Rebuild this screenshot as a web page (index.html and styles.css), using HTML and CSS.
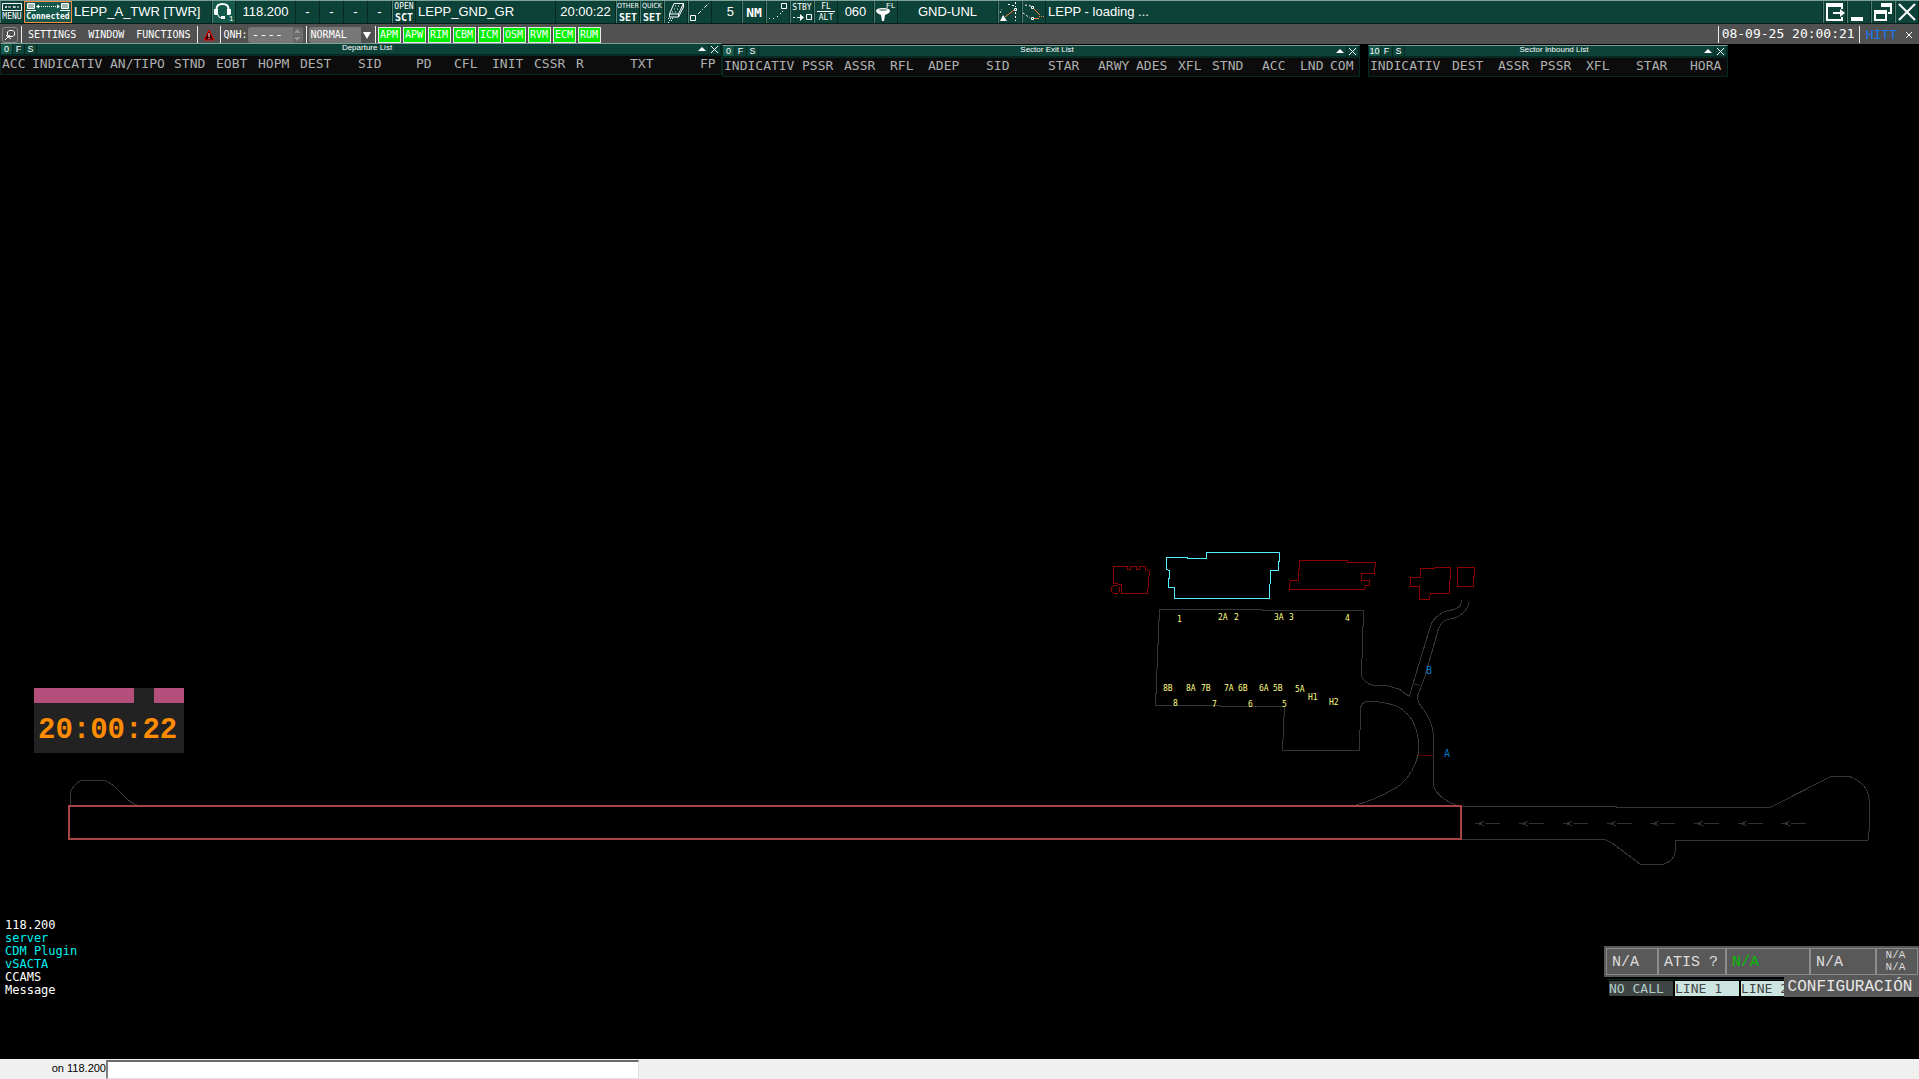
FILE: index.html
```html
<!DOCTYPE html>
<html lang="es">
    <head>
        <meta charset="UTF-8" />
        <meta name="viewport" content="width=device-width, initial-scale=1.0"/>
        <title>LEPP_A_TWR</title>
        <link rel="stylesheet" href="styles.css">
    </head>
    <body>
        <header class="topbar">
            <button type="button" class="cell w-24 stack">
                <svg width="20" height="8" viewBox="0 0 20 8"><path d="M.5.5h19v7H.5z" class="line"/><path d="M3 4h2M6 4h3M11 4h3M15 4h2M4 3v2M12 3v2" class="line"/></svg>
                <span class="tiny">MENU</span>
            </button>
            <button type="button" class="cell w-48 stack connected">
                <svg width="44" height="8" viewBox="0 0 44 8"><path d="M1.500 .5h7v5h-7zM0 7.500h10M35.500 .5h7v5h-7zM34 7.500h10" class="line"/><path d="M2 1h6v4H2zM36 1h6v4h-6z" fill="#9fb8b2"/><path d="M13 3.500h19" class="line" stroke-dasharray="1 1"/><path d="M10 3.500l3-2v4zM34 3.500l-3-2v4z" fill="#fff"/></svg>
                <span class="tiny">Connected</span>
            </button>
            <div class="cell w-140 left">LEPP_A_TWR [TWR]</div>
            <button type="button" class="cell w-24 lit" aria-label="Voice">
                <svg width="22" height="20" viewBox="0 0 22 20"><path d="M3.500 9V7q0-5 6-5t6 5v2" class="line thick"/><path d="M1 7h4v6H2l-1-1zM14 7h4v5l-1 1h-3z" fill="#fff"/><path d="M4.500 12q1 4 4 4" class="line"/><path d="M8 14h4v3H8z" fill="#fff"/><text x="16" y="19" class="svg-num">1</text></svg>
            </button>
            <div class="cell w-60">118.200</div>
            <div class="cell w-24">-</div>
            <div class="cell w-24">-</div>
            <div class="cell w-24">-</div>
            <div class="cell w-24">-</div>
            <button type="button" class="cell w-24 stack"><span class="tiny">OPEN</span><span class="small">SCT</span></button>
            <div class="cell w-140 left">LEPP_GND_GR</div>
            <div class="cell w-60">20:00:22</div>
            <button type="button" class="cell w-24 stack"><span class="tiny narrow">OTHER</span><span class="small">SET</span></button>
            <button type="button" class="cell w-24 stack"><span class="tiny narrow">QUICK</span><span class="small">SET</span></button>
            <button type="button" class="cell w-24" aria-label="Draw">
                <svg width="22" height="22" viewBox="0 0 22 22"><path d="M9 2.500h9.500l-5 10.500H4.500zM4.500 13v3h9l5-10V2.500M13.500 13v3" class="line"/><path d="M10 5h6M9 8h6M7 11h6" class="line" stroke-dasharray="1 2"/><path d="M3 17.500h6M4 19.500h4M3 21.500h2" class="line" stroke-dasharray="1 1"/></svg>
            </button>
            <button type="button" class="cell w-24" aria-label="Measure">
                <svg width="22" height="22" viewBox="0 0 22 22"><path d="M1.500 14.500h5v5h-5z" class="line"/><path d="M9 13L20 2" class="line" stroke-dasharray="4 2 1 2"/></svg>
            </button>
            <div class="cell w-30 right">5</div>
            <button type="button" class="cell w-24 unit">NM</button>
            <button type="button" class="cell w-24" aria-label="History trail">
                <svg width="22" height="22" viewBox="0 0 22 22"><path d="M14.500 2.500h5v5h-5z" class="line"/><path d="M2 17.500h1M6 17.500h1M10 15.500h1M13 12.500h1M15 10.500h1" class="line"/></svg>
            </button>
            <button type="button" class="cell w-24 stack">
                <span class="tiny">STBY</span>
                <svg width="20" height="9" viewBox="0 0 20 9"><path d="M1 4.500h2M5 4.500h6M14.500 1.500h5v5h-5z" class="line"/><path d="M8 1l4 3.500L8 8z" fill="#fff"/></svg>
            </button>
            <button type="button" class="cell w-24 stack"><span class="tiny over">FL</span><span class="tiny">ALT</span></button>
            <div class="cell w-36">060</div>
            <button type="button" class="cell w-24" aria-label="Level filter">
                <svg width="22" height="22" viewBox="0 0 22 22"><path d="M1 10q0-3 7-3t7 3q0 2-5 4l-1 6H7l-1-6q-5-2-5-4z" fill="#fff"/><path d="M3 9q5-2 10 0-5 2-10 0" fill="#78958d"/><text x="11" y="7" class="svg-num">FL</text></svg>
            </button>
            <div class="cell w-100">GND-UNL</div>
            <button type="button" class="cell w-24" aria-label="Runway">
                <svg width="22" height="22" viewBox="0 0 22 22"><path d="M1 20h7L4 14z" fill="#fff"/><path d="M6 16L15 9" class="line warm"/><path d="M15.500 7.500h2v2h-2z" class="line"/><path d="M16.500 11v9M9 3.500h2M13 4.500h2M16.500 1v5M1 12l2-4" class="line" stroke-dasharray="2 2"/></svg>
            </button>
            <button type="button" class="cell w-24" aria-label="Routes">
                <svg width="22" height="22" viewBox="0 0 22 22"><path d="M10 7l7 7M10 17.500h6" class="line warm"/><path d="M16 15.500h6" class="line warm" stroke-dasharray="1 1"/><path d="M8.500 5.500h2v2h-2zM8.500 16.500h2v2h-2z" class="line"/><path d="M2 4l6 1M0 12l7 5" class="line" stroke-dasharray="2 2"/></svg>
            </button>
            <div class="cell grow left">LEPP - loading ...</div>
            <button type="button" class="cell w-24" aria-label="Exit">
                <svg width="20" height="18" viewBox="0 0 20 18"><path d="M17 6V1H2v16h15v-3" class="line thick"/><path d="M1 0h17v4H1z" fill="#fff"/><path d="M8 10h8" class="line thick"/><path d="M15 6l5 4-5 4z" fill="#fff"/></svg>
            </button>
            <button type="button" class="cell w-24" aria-label="Minimize">
                <svg width="20" height="18" viewBox="0 0 20 18"><path d="M2 14h12v4H2z" fill="#fff"/></svg>
            </button>
            <button type="button" class="cell w-24" aria-label="Restore">
                <svg width="20" height="18" viewBox="0 0 20 18"><path d="M9 2h9v8h-3M2 8h11v9H2z" class="line thick"/><path d="M8 0h11v4H8zM1 7h13v4H1z" fill="#fff"/></svg>
            </button>
            <button type="button" class="cell w-24" aria-label="Close">
                <svg width="20" height="18" viewBox="0 0 20 18"><path d="M2 1l16 16M18 1L2 17" class="line thick"/></svg>
            </button>
        </header>

        <nav class="menubar">
            <button type="button" class="pin" aria-label="Pin">
                <svg width="12" height="12" viewBox="0 0 12 12"><path d="M5 1.500h4l1.500 1.500v3L9 7.500H5L3.500 6V3z" class="line"/><path d="M6 6L1 11M2 6l5 4" class="line"/></svg>
            </button>
            <div class="menus">
                <a href="#settings">SETTINGS</a>
                <a href="#window">WINDOW</a>
                <a href="#functions">FUNCTIONS</a>
            </div>
            <div class="group alert">
                <svg width="12" height="12" viewBox="0 0 12 12"><path d="M6 1L1 11h10z" fill="#400" stroke="#f00000"/><path d="M6 4v4M6 9v1" class="line"/></svg>
            </div>
            <div class="group">
                <label for="qnh">QNH:</label>
                <div class="spin">
                    <input type="text" id="qnh" value="----">
                    <svg width="9" height="16" viewBox="0 0 9 16"><path d="M0 0h9v7H0zM0 8h9v8H0z" fill="#676767"/><path d="M1 6l3-4 4 4zM1 10h7l-4 4z" fill="#949494"/></svg>
                </div>
            </div>
            <div class="group">
                <div class="drop">
                    <select id="mode" aria-label="Mode">
                        <option>NORMAL</option>
                    </select>
                    <svg width="12" height="16" viewBox="0 0 12 16"><path d="M0 0h12v16H0z" fill="#505050"/><path d="M2 5h8l-4 7z" fill="#fff"/></svg>
                </div>
            </div>
            <div class="group flags">
                <button type="button">APM</button>
                <button type="button">APW</button>
                <button type="button">RIM</button>
                <button type="button">CBM</button>
                <button type="button">ICM</button>
                <button type="button">OSM</button>
                <button type="button">RVM</button>
                <button type="button">ECM</button>
                <button type="button">RUM</button>
            </div>
            <div class="date">08-09-25 20:00:21</div>
            <div class="group hitt">HITT</div>
            <button type="button" class="shut" aria-label="Close bar">
                <svg width="8" height="8" viewBox="0 0 8 8"><path d="M1 1l6 6M7 1L1 7" class="line"/></svg>
            </button>
        </nav>

        <main class="radar">
            <svg class="map" viewBox="0 44 1919 1015" preserveAspectRatio="xMinYMin meet">
                <!-- terminal buildings and apron -->
                <svg x="1100" y="540" width="400" height="220" viewBox="0 0 1200 660">
                    <path class="building" d="M40 79H82V88H91V79H109V88H119V79H136V88L148 93V106L145 116V143L142 146V160H64V133H56L52 130H40z"/>
                    <circle class="building" cx="47" cy="148" r="13"/>
                    <path class="terminal" d="M199 52H261V55H320V37H539V62L536 66V91H511V130L508 134V175H223V142H205V117L208 115V91L199 89z"/>
                    <path class="building" d="M598 61H742V67H827V79L824 82V100H784V121H808V136H796L793 148H568V136L571 121H595V91L598 88z"/>
                    <path class="building" d="M962 86H1004V82H1051V118L1048 122V160H991L988 178H958V139H931V112H961z"/>
                    <path class="building" d="M1072 82H1123V109L1120 112V139H1072z"/>
                    <path class="taxi" d="M784 357V409Q796 430 820 436Q872 436 882 443Q900 446 910 457L928 469L943 418L991 260Q997 240 1010 231Q1028 215 1048 211Q1084 208 1085 180"/>
                    <path class="taxi" d="M784 357L787 352V262L790 259V211H486V208H179V238L176 243V312L172 316V385L169 390V460L166 463V496H360V499H553V528L550 534V595L547 599V631H778V573L781 568V505Q785 490 799 484Q835 484 856 489Q895 497 910 511Q936 532 943 556Q955 580 955 610V646L949 660"/>
                    <path class="taxi" d="M1108 183Q1105 210 1081 225Q1065 237 1040 238Q1021 249 1015 268L973 415L952 469Q954 490 970 508Q990 535 997 564L1000 580V660M940 430L961 438"/>
                    <path class="stopbar" d="M955 646H1000"/>
                </svg>
                <!-- taxiway joining the runway -->
                <path class="taxi" d="M1418 755Q1412 779 1394 789Q1375 800 1356 805M1433 755V783Q1435 797 1456 805"/>
                <!-- runway ends -->
                <path class="taxi" d="M1462 806H1616V807H1771L1830 777L1836 776H1848Q1868 783 1869 799V831L1868 840H1675V852Q1674 861 1664 864H1640L1612 843L1604 839H1462"/>
                <path class="taxi" d="M70 805V796Q71 785 82 780H103Q111 782 120 792Q131 804 137 805"/>
                <rect class="runway" x="69" y="806" width="1392" height="33"/>
                <g class="arrow">
                    <path id="arrow" d="M1477 823.500h5M1485 823.500h15M1484 821.500l-7 2 7 2"/>
                    <use href="#arrow" x="44"/>
                    <use href="#arrow" x="88"/>
                    <use href="#arrow" x="132"/>
                    <use href="#arrow" x="175"/>
                    <use href="#arrow" x="219"/>
                    <use href="#arrow" x="263"/>
                    <use href="#arrow" x="306"/>
                </g>
                <g class="stand">
                    <text x="1177" y="622">1</text>
                    <text x="1218" y="620">2A</text>
                    <text x="1234" y="620">2</text>
                    <text x="1274" y="620">3A</text>
                    <text x="1289" y="620">3</text>
                    <text x="1345" y="621">4</text>
                    <text x="1163" y="691">8B</text>
                    <text x="1186" y="691">8A</text>
                    <text x="1201" y="691">7B</text>
                    <text x="1224" y="691">7A</text>
                    <text x="1238" y="691">6B</text>
                    <text x="1259" y="691">6A</text>
                    <text x="1273" y="691">5B</text>
                    <text x="1295" y="692">5A</text>
                    <text x="1308" y="700">H1</text>
                    <text x="1329" y="705">H2</text>
                    <text x="1173" y="706">8</text>
                    <text x="1212" y="707">7</text>
                    <text x="1248" y="707">6</text>
                    <text x="1282" y="707">5</text>
                </g>
                <g class="taxi-name">
                    <text x="1426" y="674">B</text>
                    <text x="1444" y="757">A</text>
                </g>
            </svg>

            <section class="list departure">
                <div class="title">
                    <button type="button" class="on">0</button><button type="button">F</button><button type="button">S</button>
                    <h2>Departure List</h2>
                    <button type="button" aria-label="Collapse"><svg width="10" height="9" viewBox="0 0 10 9"><path d="M1 6h8L5 2z" fill="#fff"/></svg></button><button type="button" aria-label="Close"><svg width="10" height="9" viewBox="0 0 10 9"><path d="M2 1l7 7M9 1L2 8" class="line"/></svg></button>
                </div>
                <table>
                    <tr>
                        <th class="c-30">ACC</th>
                        <th class="c-78">INDICATIV</th>
                        <th class="c-64">AN/TIPO</th>
                        <th class="c-42">STND</th>
                        <th class="c-42">EOBT</th>
                        <th class="c-42">HOPM</th>
                        <th class="c-58">DEST</th>
                        <th class="c-58">SID</th>
                        <th class="c-38">PD</th>
                        <th class="c-38">CFL</th>
                        <th class="c-42">INIT</th>
                        <th class="c-42">CSSR</th>
                        <th class="c-54">R</th>
                        <th class="c-70">TXT</th>
                        <th>FP</th>
                    </tr>
                </table>
            </section>

            <section class="list exit">
                <div class="title">
                    <button type="button" class="on">0</button><button type="button">F</button><button type="button">S</button>
                    <h2>Sector Exit List</h2>
                    <button type="button" aria-label="Collapse"><svg width="10" height="9" viewBox="0 0 10 9"><path d="M1 6h8L5 2z" fill="#fff"/></svg></button><button type="button" aria-label="Close"><svg width="10" height="9" viewBox="0 0 10 9"><path d="M2 1l7 7M9 1L2 8" class="line"/></svg></button>
                </div>
                <table>
                    <tr>
                        <th class="c-78">INDICATIV</th>
                        <th class="c-42">PSSR</th>
                        <th class="c-46">ASSR</th>
                        <th class="c-38">RFL</th>
                        <th class="c-58">ADEP</th>
                        <th class="c-62">SID</th>
                        <th class="c-50">STAR</th>
                        <th class="c-38">ARWY</th>
                        <th class="c-42">ADES</th>
                        <th class="c-34">XFL</th>
                        <th class="c-50">STND</th>
                        <th class="c-38">ACC</th>
                        <th class="c-30">LND</th>
                        <th>COM</th>
                    </tr>
                </table>
            </section>

            <section class="list inbound">
                <div class="title">
                    <button type="button" class="on">10</button><button type="button">F</button><button type="button">S</button>
                    <h2>Sector Inbound List</h2>
                    <button type="button" aria-label="Collapse"><svg width="10" height="9" viewBox="0 0 10 9"><path d="M1 6h8L5 2z" fill="#fff"/></svg></button><button type="button" aria-label="Close"><svg width="10" height="9" viewBox="0 0 10 9"><path d="M2 1l7 7M9 1L2 8" class="line"/></svg></button>
                </div>
                <table>
                    <tr>
                        <th class="c-82">INDICATIV</th>
                        <th class="c-46">DEST</th>
                        <th class="c-42">ASSR</th>
                        <th class="c-46">PSSR</th>
                        <th class="c-50">XFL</th>
                        <th class="c-54">STAR</th>
                        <th>HORA</th>
                    </tr>
                </table>
            </section>

            <section class="clock">
                <div class="strip"><span></span><span></span></div>
                <time>20:00:22</time>
            </section>

            <ul class="chat">
                <li>118.200</li>
                <li class="unread">server</li>
                <li class="unread">CDM Plugin</li>
                <li class="unread">vSACTA</li>
                <li>CCAMS</li>
                <li>Message</li>
            </ul>

            <section class="atis">
                <div class="status">
                    <button type="button" class="s-52">N/A</button>
                    <button type="button" class="s-68">ATIS ?</button>
                    <button type="button" class="s-84 ok">N/A</button>
                    <button type="button" class="s-66">N/A</button>
                    <button type="button" class="s-42 two">N/A<br>N/A</button>
                </div>
                <div class="lines">
                    <div class="calls">
                        <button type="button" class="idle">NO CALL</button>
                        <button type="button">LINE 1</button>
                        <button type="button">LINE 2</button>
                    </div>
                    <button type="button" class="config">CONFIGURACIÓN</button>
                </div>
            </section>
        </main>

        <footer class="command">
            <label for="cmd">on 118.200</label>
            <input type="text" id="cmd" autofocus>
        </footer>
    </body>
</html>
```
FILE: styles.css
```css
* {
    box-sizing: border-box;
}
body {
    margin: 0;
    height: 100vh;
    display: flex;
    flex-direction: column;
    overflow: hidden;
    background-color: #000;
    color: #fff;
    font-family: "DejaVu Sans Mono", monospace;
}
button, input, select {
    font: inherit;
    color: inherit;
    margin: 0;
    padding: 0;
    border: none;
    border-radius: 0;
    background: none;
}
svg {
    display: block;
    flex: none;
}
.line {
    fill: none;
    stroke: #fff;
    stroke-width: 1;
}
.thick {
    stroke-width: 2;
}
.warm {
    stroke: #f08040;
}
.svg-num {
    fill: #fff;
    font-size: 8px;
}

/* top toolbar */
.topbar {
    display: flex;
    height: 24px;
    flex: none;
    background-color: #0d4238;
    border-top: 1px solid #7ca198;
    border-bottom: 1px solid #03211b;
    font-family: "Liberation Sans", Arial, sans-serif;
    font-size: 13px;
}
.cell {
    display: flex;
    align-items: center;
    justify-content: center;
    flex: none;
    padding-bottom: 2px;
    white-space: nowrap;
    border-right: 1px solid #06291f;
}
button.cell {
    padding-bottom: 0;
    border-left: 1px solid #527f75;
}
.left {
    justify-content: flex-start;
    padding-left: 2px;
}
.right {
    justify-content: flex-end;
    padding-right: 7px;
}
.grow {
    flex: 1;
}
.stack {
    flex-direction: column;
    gap: 1px;
    font-family: "DejaVu Sans Mono", monospace;
}
button.connected {
    background-color: #14594a;
    border: 1px solid #ff8848;
    font-weight: bold;
}
.lit {
    background-color: #14594a;
}
.tiny {
    font-size: 8px;
    line-height: 9px;
}
.narrow {
    font-family: "DejaVu Sans Condensed", "DejaVu Sans", sans-serif;
    font-size: 7px;
}
.small {
    font-size: 10px;
    font-weight: bold;
    line-height: 11px;
}
.over {
    border-bottom: 1px solid #fff;
    padding: 0 4px;
}
.unit {
    font-family: "DejaVu Sans Mono", monospace;
    font-weight: bold;
}
.w-24 {
    width: 24px;
}
.w-30 {
    width: 30px;
}
.w-36 {
    width: 36px;
}
.w-48 {
    width: 48px;
}
.w-60 {
    width: 60px;
}
.w-100 {
    width: 100px;
}
.w-140 {
    width: 140px;
}

/* menu bar */
.menubar {
    display: flex;
    align-items: center;
    height: 20px;
    flex: none;
    padding: 1px 6px 0 2px;
    background-color: #515151;
    font-size: 10px;
}
.pin {
    display: flex;
    align-items: center;
    justify-content: center;
    width: 16px;
    height: 16px;
    margin-right: 3px;
    border: 1px solid #8a8a8a;
    border-radius: 3px;
}
.menus {
    display: flex;
    align-items: center;
    gap: 12px;
    height: 17px;
    padding: 0 7px 0 6px;
    border-left: 1px solid #eee;
}
.menus a {
    color: #fff;
    text-decoration: none;
}
.group {
    display: flex;
    align-items: center;
    height: 17px;
    padding: 0 2px;
    border-left: 1px solid #eee;
}
.alert {
    padding: 0 5px;
}
.spin, .drop {
    display: flex;
    align-items: center;
    height: 16px;
    background-color: #777;
    border-radius: 3px;
    overflow: hidden;
}
.spin {
    width: 55px;
    margin-right: 1px;
}
.spin input {
    flex: 1;
    min-width: 0;
    padding-left: 4px;
    font-size: 13px;
}
.spin svg {
    margin-right: 1px;
}
.drop {
    width: 64px;
}
.drop select {
    flex: 1;
    min-width: 0;
    padding-left: 2px;
    appearance: none;
}
.flags {
    gap: 2px;
}
.flags button {
    width: 23px;
    height: 16px;
    background-color: #00f000;
    border: 1px solid #e8e8e8;
    line-height: 13px;
}
.date {
    margin-left: auto;
    height: 17px;
    padding: 0 4px 0 3px;
    border-left: 1px solid #eee;
    font-size: 13px;
    line-height: 16px;
}
.hitt {
    padding: 0 8px 0 6px;
    color: #1a78f0;
    font-size: 13px;
}

/* radar screen */
.radar {
    position: relative;
    flex: 1;
    min-height: 0;
}
.map {
    width: 100%;
    height: 100%;
    shape-rendering: crispEdges;
}
.building, .terminal, .taxi, .stopbar, .runway, .arrow {
    fill: none;
    stroke-width: 1;
    vector-effect: non-scaling-stroke;
}
.building {
    stroke: #8b0000;
}
.terminal {
    stroke: #50f0ff;
}
.taxi {
    stroke: #353535;
}
.stopbar {
    stroke: #600000;
}
.runway {
    stroke: #a84444;
    stroke-width: 2;
}
.arrow {
    stroke: #303030;
}
.stand {
    fill: #ffff80;
    font-size: 8px;
}
.taxi-name {
    fill: #0078c0;
    font-size: 10px;
}

/* flight lists */
.list {
    position: absolute;
    background-color: #0c0c0c;
    border: 1px solid #062a23;
    border-top: 1px solid #7ca198;
}
.departure {
    top: -1px;
    left: 0;
    width: 722px;
}
.exit {
    top: 1px;
    left: 722px;
    width: 638px;
}
.inbound {
    top: 1px;
    left: 1368px;
    width: 360px;
}
.title {
    display: flex;
    height: 10px;
    background-color: #0d4238;
    font-family: "Liberation Sans", Arial, sans-serif;
    font-size: 9px;
    line-height: 9px;
}
.title h2 {
    flex: 1;
    margin: 0;
    font-size: 8px;
    font-weight: normal;
    line-height: 8px;
    text-align: center;
}
.title button {
    width: 12px;
    border-right: 1px solid #06291f;
}
.title .on {
    background-color: #14594a;
}
.list table {
    width: 100%;
    table-layout: fixed;
    border-collapse: collapse;
    border-top: 2px solid #062a23;
}
.list th {
    padding: 0 0 2px 1px;
    color: #b0b0b0;
    font-size: 13px;
    font-weight: normal;
    line-height: 16px;
    text-align: left;
    white-space: nowrap;
}
.c-30 {
    width: 30px;
}
.c-34 {
    width: 34px;
}
.c-38 {
    width: 38px;
}
.c-42 {
    width: 42px;
}
.c-46 {
    width: 46px;
}
.c-50 {
    width: 50px;
}
.c-54 {
    width: 54px;
}
.c-58 {
    width: 58px;
}
.c-62 {
    width: 62px;
}
.c-64 {
    width: 64px;
}
.c-70 {
    width: 70px;
}
.c-78 {
    width: 78px;
}
.c-82 {
    width: 82px;
}

/* floating clock */
.clock {
    position: absolute;
    top: 644px;
    left: 34px;
    width: 150px;
    height: 65px;
    background-color: #222;
}
.strip {
    display: flex;
    justify-content: space-between;
    height: 15px;
}
.strip span {
    width: 30px;
    background-color: #b44e7a;
}
.strip span:first-child {
    width: 100px;
}
.clock time {
    display: block;
    padding-left: 4px;
    color: #ff8c00;
    font-family: "Liberation Mono", "Courier New", monospace;
    font-size: 29px;
    font-weight: bold;
    line-height: 56px;
}

/* chat channels */
.chat {
    position: absolute;
    left: 5px;
    bottom: 62px;
    margin: 0;
    padding: 0;
    list-style: none;
    font-size: 12px;
    line-height: 13px;
}
.unread {
    color: #00f0f0;
}

/* atis and voice panel */
.atis {
    position: absolute;
    right: 0;
    bottom: 62px;
    width: 315px;
}
.status {
    display: flex;
    height: 31px;
    padding: 2px 1px 2px 2px;
    background-color: #595959;
    font-family: "Liberation Mono", "Courier New", monospace;
    font-size: 15px;
    color: #ddd;
}
.status button {
    padding: 2px 0 0 5px;
    border: 1px solid #8c8c8c;
    text-align: left;
}
.status .ok {
    color: #00c000;
}
.status .two {
    padding: 0 3px 2px 0;
    font-size: 11px;
    line-height: 12px;
    text-align: center;
}
.s-42 {
    width: 42px;
}
.s-52 {
    width: 52px;
}
.s-66 {
    width: 66px;
}
.s-68 {
    width: 68px;
}
.s-84 {
    width: 84px;
}
.lines {
    display: flex;
    justify-content: flex-end;
    height: 20px;
}
.calls {
    display: flex;
    gap: 2px;
    flex: 1;
    margin: 2px 0 0 3px;
    padding: 1px 0 1px 2px;
    overflow: hidden;
    border-top: 1px solid #0a2a26;
    font-size: 13px;
}
.calls button {
    flex: none;
    width: 64px;
    background-color: #cde5e0;
    color: #444;
    line-height: 15px;
    text-align: left;
}
.calls .idle {
    background-color: #3f4444;
    color: #b0cfca;
}
.config {
    width: 135px;
    padding-right: 3px;
    background-color: #595959;
    color: #e8e8e8;
    font-family: "Liberation Mono", "Courier New", monospace;
    font-size: 16px;
}

/* command line */
.command {
    display: flex;
    height: 20px;
    flex: none;
    background-color: #f0f0f0;
    color: #000;
    font-family: "Liberation Sans", Arial, sans-serif;
    font-size: 11px;
}
.command label {
    width: 106px;
    line-height: 18px;
    text-align: right;
}
.command input {
    width: 533px;
    margin-top: 1px;
    padding-left: 1px;
    background-color: #fff;
    border: 1px solid #e0e0e0;
    border-top: 2px solid #6a6a6a;
    border-left: 2px solid #808080;
    outline: none;
}
```
